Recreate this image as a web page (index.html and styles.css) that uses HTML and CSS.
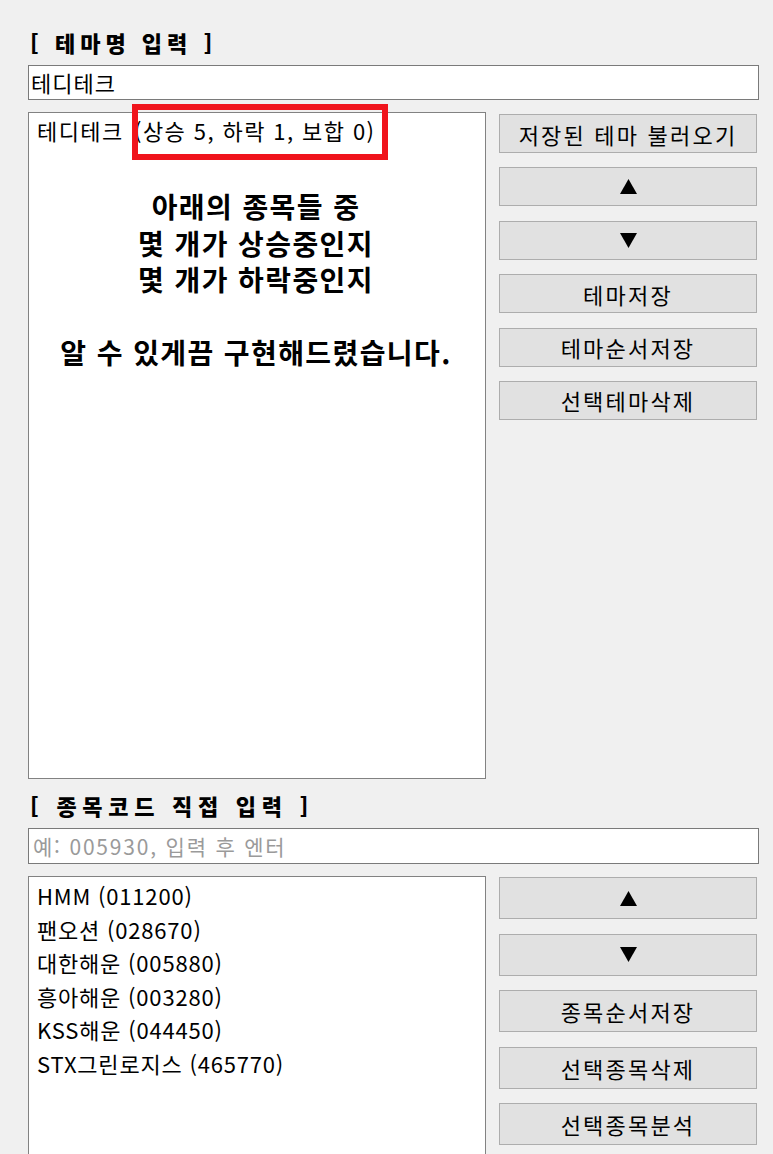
FILE: index.html
```html
<!DOCTYPE html>
<html lang="ko">
<head>
<meta charset="utf-8">
<link rel="stylesheet" href="styles.css">
</head>
<body>
<div class="page">
  <div class="title">[ 테마명 입력 ]</div>
  <div class="input">테디테크</div>
  <div class="row row-top">
    <div class="listbox list-top">
      <div class="item"><span class="name">테디테크</span> (상승 5, 하락 1, 보합 0)</div>
      <div class="note">
        <div>아래의 종목들 중</div>
        <div>몇 개가 상승중인지</div>
        <div>몇 개가 하락중인지</div>
        <div>&nbsp;</div>
        <div>알 수 있게끔 구현해드렸습니다.</div>
      </div>
      <div class="highlight"></div>
    </div>
    <div class="buttons buttons-top">
      <div class="btn">저장된 테마 불러오기</div>
      <div class="btn"><svg width="17" height="15" viewBox="0 0 17 15"><polygon points="8.5,0 17,15 0,15" fill="#000"/></svg></div>
      <div class="btn"><svg width="17" height="15" viewBox="0 0 17 15"><polygon points="0,0 17,0 8.5,15" fill="#000"/></svg></div>
      <div class="btn">테마저장</div>
      <div class="btn">테마순서저장</div>
      <div class="btn">선택테마삭제</div>
    </div>
  </div>
  <div class="title title-2">[ 종목코드 직접 입력 ]</div>
  <div class="input input-2"><span class="placeholder">예: 005930, 입력 후 엔터</span></div>
  <div class="row row-bottom">
    <div class="listbox list-bottom">
      <div class="item">HMM (011200)</div>
      <div class="item">팬오션 (028670)</div>
      <div class="item">대한해운 (005880)</div>
      <div class="item">흥아해운 (003280)</div>
      <div class="item">KSS해운 (044450)</div>
      <div class="item">STX그린로지스 (465770)</div>
    </div>
    <div class="buttons buttons-bottom">
      <div class="btn"><svg width="17" height="15" viewBox="0 0 17 15"><polygon points="8.5,0 17,15 0,15" fill="#000"/></svg></div>
      <div class="btn"><svg width="17" height="15" viewBox="0 0 17 15"><polygon points="0,0 17,0 8.5,15" fill="#000"/></svg></div>
      <div class="btn">종목순서저장</div>
      <div class="btn">선택종목삭제</div>
      <div class="btn">선택종목분석</div>
    </div>
  </div>
</div>
</body>
</html>
```

FILE: styles.css
```css
html, body {
  margin: 0;
  padding: 0;
  background: #f0f0f0;
  overflow: hidden;
}
body {
  font-family: "Noto Sans CJK KR", "Noto Sans", sans-serif;
  color: #000;
  height: 1154px;
}
.page {
  padding: 28px 14px 0 28px;
}
.title {
  font-size: 22px;
  font-weight: 900;
  line-height: 28px;
  height: 28px;
  letter-spacing: 5px;
  padding-left: 2px;
  margin-bottom: 9px;
}
.title-2 {
  margin-top: 12px;
  letter-spacing: 5.7px;
}
.input {
  box-sizing: border-box;
  height: 35px;
  background: #fff;
  border: 1px solid #7a7a7a;
  font-size: 22px;
  line-height: 32px;
  padding-left: 2px;
  white-space: nowrap;
  letter-spacing: 1px;
}
.input-2 {
  height: 36px;
}
.placeholder {
  color: #9a9a9a;
  font-size: 21px;
  padding-left: 2px;
  letter-spacing: 1.8px;
}
.row {
  display: grid;
  grid-template-columns: 458px 258px;
  column-gap: 13px;
  margin-top: 12px;
}
.listbox {
  position: relative;
  box-sizing: border-box;
  background: #fff;
  border: 1px solid #828282;
  padding: 0 8px;
}
.list-top {
  height: 667px;
}
.list-bottom {
  height: 320px;
  padding-top: 2px;
}
.item {
  font-size: 22px;
  line-height: 34px;
  white-space: nowrap;
  letter-spacing: 1.4px;
}
.name {
  margin-right: 3px;
}
.list-bottom .item {
  line-height: 33.6px;
  letter-spacing: 0.8px;
}
.note {
  margin-top: 41px;
  text-align: center;
  font-size: 28px;
  font-weight: bold;
  line-height: 36.5px;
  padding-right: 2px;
  letter-spacing: 1.4px;
}
.highlight {
  position: absolute;
  left: 103px;
  top: -9px;
  width: 256px;
  height: 56px;
  box-sizing: border-box;
  border: 6px solid #f0141c;
}
.buttons {
  display: flex;
  flex-direction: column;
  padding-top: 2px;
}
.buttons-top {
  gap: 14.4px;
}
.buttons-bottom {
  gap: 14.5px;
  padding-top: 1px;
}
.btn {
  box-sizing: border-box;
  height: 39px;
  background: #e1e1e1;
  border: 1px solid #adadad;
  display: flex;
  align-items: center;
  justify-content: center;
  font-size: 22px;
  white-space: nowrap;
  letter-spacing: 2.2px;
}
.buttons-bottom .btn {
  height: 42px;
}
```
